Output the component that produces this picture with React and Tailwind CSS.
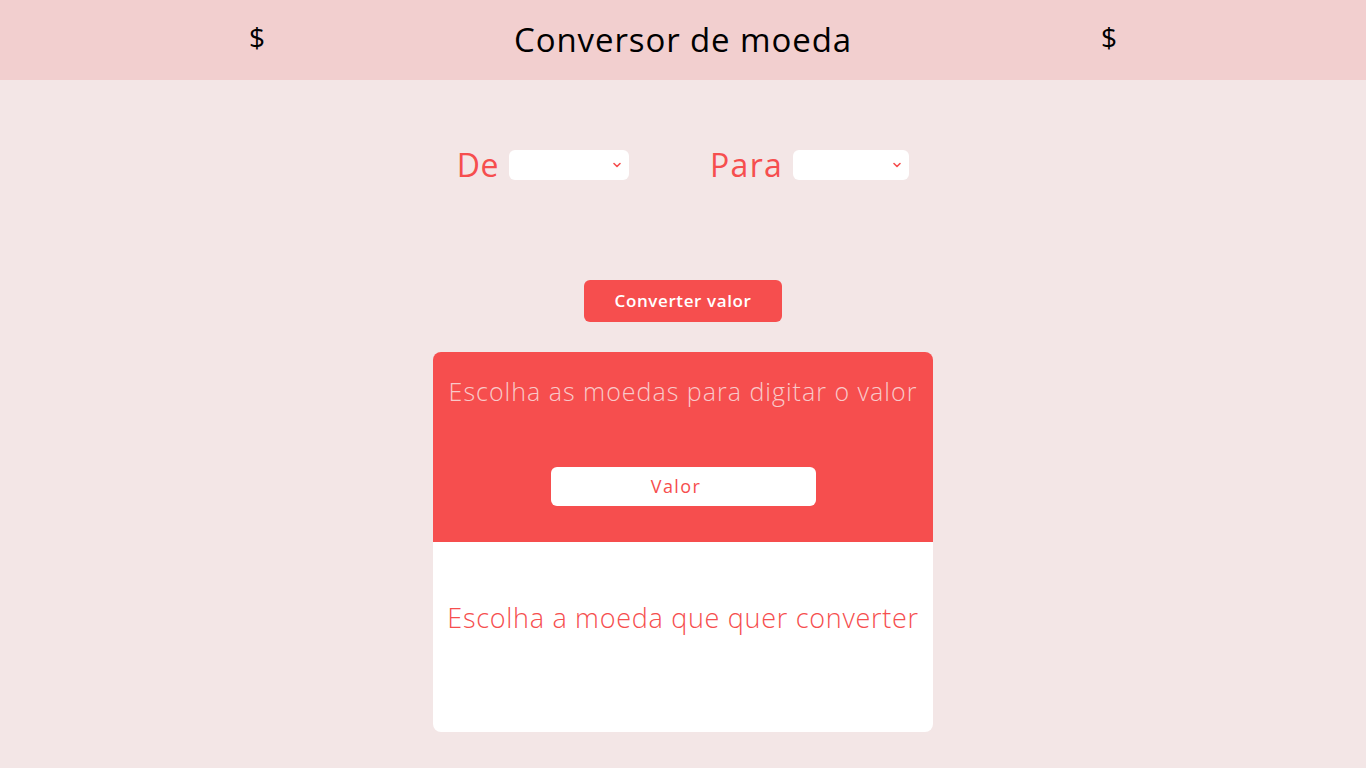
import React from "react";

const font = { fontFamily: '"Open Sans", "Liberation Sans", sans-serif' };

function Select({ w }) {
  return (
    <div className={`relative h-[30px] ${w} rounded-[6px] bg-white`}>
      <svg className="absolute right-[8px] top-[12px]" width="8" height="6" viewBox="0 0 8 6">
        <path d="M1 1.5 L4 4.5 L7 1.5" stroke="#f64e4e" strokeWidth="1.6" fill="none" strokeLinecap="round" strokeLinejoin="round" />
      </svg>
    </div>
  );
}

export default function App() {
  return (
    <div className="min-h-[768px] bg-[#f3e6e6]" style={font}>
      <header className="h-[80px] bg-[#f2cfcf] flex items-center justify-center relative">
        <span className="absolute left-[249px] top-[16px] text-[28px] text-black">$</span>
        <h1 className="text-[33px] font-normal text-black tracking-[0.9px]">Conversor de moeda</h1>
        <span className="absolute left-[1101px] top-[16px] text-[28px] text-black">$</span>
      </header>
      <div className="flex justify-center pt-[69px]">
        <div className="flex items-center">
          <span className="text-[32px] text-[#f64e4e] mr-[10px] leading-none tracking-[0.5px]">De</span>
          <Select w="w-[120px]" />
          <span className="text-[32px] text-[#f64e4e] ml-[81px] mr-[10px] leading-none tracking-[1.3px]">Para</span>
          <Select w="w-[116px]" />
        </div>
      </div>
      <div className="flex justify-center mt-[99px]">
        <button className="w-[198px] h-[42px] rounded-[6px] bg-[#f64e4e] text-white text-[17px] font-semibold tracking-[0.6px]">
          Converter valor
        </button>
      </div>
      <div className="flex justify-center mt-[30px]">
        <div className="w-[500px] rounded-[8px] overflow-hidden">
          <div className="h-[190px] bg-[#f64e4e] flex flex-col items-center pt-[21px]">
            <p className="text-[25px] font-light text-[#f9c9c9] leading-[36px] tracking-[1px] whitespace-nowrap">Escolha as moedas para digitar o valor</p>
            <div className="mt-[58px] w-[265px] h-[39px] rounded-[6px] bg-white flex items-center justify-center">
              <span className="text-[18px] font-medium text-[#f64e4e] tracking-[1.4px] mr-[14px]">Valor</span>
            </div>
          </div>
          <div className="h-[190px] bg-white flex items-center justify-center pb-[37px]">
            <p className="text-[27px] font-light text-[#f64e4e] tracking-[0.7px] whitespace-nowrap">Escolha a moeda que quer converter</p>
          </div>
        </div>
      </div>
    </div>
  );
}
